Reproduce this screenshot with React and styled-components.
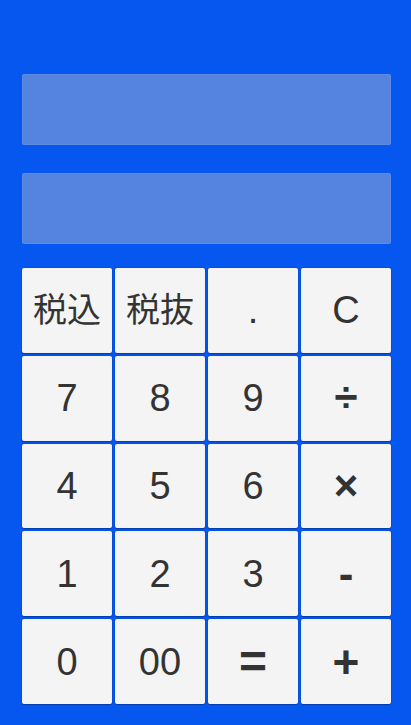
import React from "react";
import styled, { createGlobalStyle } from "styled-components";

const Global = createGlobalStyle`
  html, body { margin: 0; padding: 0; background: #0656f0; }
  #root { height: 725px; }
`;

const Page = styled.div`
  box-sizing: border-box;
  height: 725px;
  width: 411px;
  background: #0656f0;
  padding: 74px 20px 21px 22px;
  display: flex;
  flex-direction: column;
`;

const Display = styled.div`
  height: 71px;
  background: #5483e0;
  border-radius: 2px;
  box-shadow: inset 0 0 0 1px rgba(255,255,255,0.06);
  margin-bottom: ${(p) => p.$mb}px;
  flex-shrink: 0;
`;

const Keys = styled.div`
  flex: 1;
  display: grid;
  grid-template-columns: repeat(4, 90px);
  grid-template-rows: repeat(5, 1fr);
  gap: 3px;
`;

const Key = styled.button`
  margin: 0;
  padding: 0;
  border: none;
  border-radius: 2px;
  background: #f4f4f4;
  box-shadow: 0 0 0 1px rgba(0,0,0,0.06), 0 1px 1px rgba(0,0,0,0.25);
  color: #333;
  font-family: "Liberation Sans", "Noto Sans CJK JP", sans-serif;
  font-size: ${(p) => p.$size}px;
  font-weight: ${(p) => (p.$bold ? 700 : 400)};
  display: flex;
  align-items: center;
  justify-content: center;
  line-height: 1;
`;

const keys = [
  ["税込", 34], ["税抜", 34], [".", 38], ["C", 38],
  ["7", 38], ["8", 38], ["9", 38], ["÷", 42, true],
  ["4", 38], ["5", 38], ["6", 38], ["×", 42, true],
  ["1", 38], ["2", 38], ["3", 38], ["-", 44, true],
  ["0", 38], ["00", 38], ["=", 48, true], ["+", 46, true],
];

export default function App() {
  return (
    <>
      <Global />
      <Page>
        <Display $mb={28} />
        <Display $mb={24} />
        <Keys>
          {keys.map(([label, size, bold]) => (
            <Key key={label} $size={size} $bold={bold}>
              {label}
            </Key>
          ))}
        </Keys>
      </Page>
    </>
  );
}
